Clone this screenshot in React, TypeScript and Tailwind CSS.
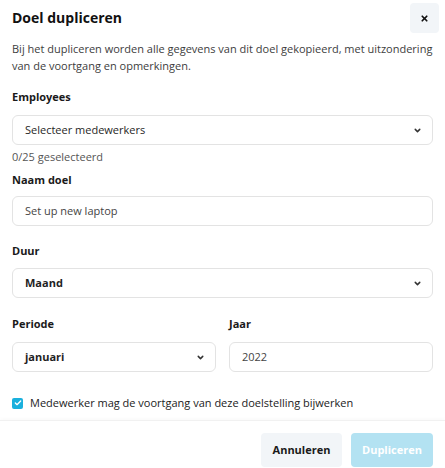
import React from 'react';
import { ChevronDown, X, Check } from 'lucide-react';

const Label: React.FC<{ children: React.ReactNode }> = ({ children }) => (
  <div className="text-[11px] font-bold text-[#1a1a1a] leading-[16px]">{children}</div>
);

const SelectBox: React.FC<{ value: string; bold?: boolean }> = ({ value, bold }) => (
  <div className="h-[30px] rounded-[6px] border border-[#e3e3e3] bg-white flex items-center justify-between pl-[12px] pr-[10px]">
    <span className={`text-[11px] text-[#1f1f1f] ${bold ? 'font-bold' : ''}`}>{value}</span>
    <ChevronDown className="w-[9px] h-[9px] text-[#333]" strokeWidth={4} />
  </div>
);

const InputBox: React.FC<{ value: string }> = ({ value }) => (
  <div className="h-[30px] rounded-[6px] border border-[#e3e3e3] bg-white flex items-center pl-[12px]">
    <span className="text-[11px] text-[#444]">{value}</span>
  </div>
);

const App: React.FC = () => {
  return (
    <div className="w-[445px] h-[468px] bg-white overflow-hidden flex flex-col" style={{ fontFamily: '"Open Sans", sans-serif' }}>
      <div className="flex items-start justify-between pl-3 pr-[6px] pt-[3px]">
        <h1 className="text-[14px] font-bold text-[#111] mt-[4px] leading-[22px]">Doel dupliceren</h1>
        <button className="w-[29px] h-[30px] rounded-[4px] bg-[#f2f5f8] flex items-center justify-center">
          <X className="w-[9px] h-[9px] text-[#111]" strokeWidth={4.5} />
        </button>
      </div>

      <div className="px-3 flex-1">
        <p className="text-[11px] leading-[17px] text-[#3d3d3d] mt-[7px]">
          Bij het dupliceren worden alle gegevens van dit doel gekopieerd, met uitzondering van de voortgang en opmerkingen.
        </p>

        <div className="mt-[15px]">
          <Label>Employees</Label>
          <div className="mt-[10px]"><SelectBox value="Selecteer medewerkers" /></div>
          <div className="text-[11px] text-[#555] mt-[4px] leading-[16px]">0/25 geselecteerd</div>
        </div>

        <div className="mt-[7px]">
          <Label>Naam doel</Label>
          <div className="mt-[8px]"><InputBox value="Set up new laptop" /></div>
        </div>

        <div className="mt-[17px]">
          <Label>Duur</Label>
          <div className="mt-[9px]"><SelectBox value="Maand" bold /></div>
        </div>

        <div className="mt-[18px] grid grid-cols-2 gap-[13px]">
          <div>
            <Label>Periode</Label>
            <div className="mt-[10px]"><SelectBox value="januari" bold /></div>
          </div>
          <div>
            <Label>Jaar</Label>
            <div className="mt-[10px]"><InputBox value="2022" /></div>
          </div>
        </div>

        <label className="mt-[23px] flex items-center gap-[7px] h-[16px]">
          <span className="w-[11px] h-[11px] rounded-[2px] bg-[#1ab0dd] flex items-center justify-center">
            <Check className="w-[8px] h-[8px] text-white" strokeWidth={4} />
          </span>
          <span className="text-[11px] text-[#222]">Medewerker mag de voortgang van deze doelstelling bijwerken</span>
        </label>
      </div>

      <div className="h-[48px] border-t border-[#f1f1f1] shadow-[0_-2px_3px_rgba(0,0,0,0.02)] flex items-start justify-end gap-[9px] pr-3 pt-[12px]">
        <button className="h-[34px] w-[81px] rounded-[4px] bg-[#f2f5f8] text-[11px] font-bold text-[#1a1a1a]">Annuleren</button>
        <button className="h-[34px] w-[82px] rounded-[4px] bg-[#b3e2f2] text-[11px] font-bold text-white">Dupliceren</button>
      </div>
    </div>
  );
};

export default App;
